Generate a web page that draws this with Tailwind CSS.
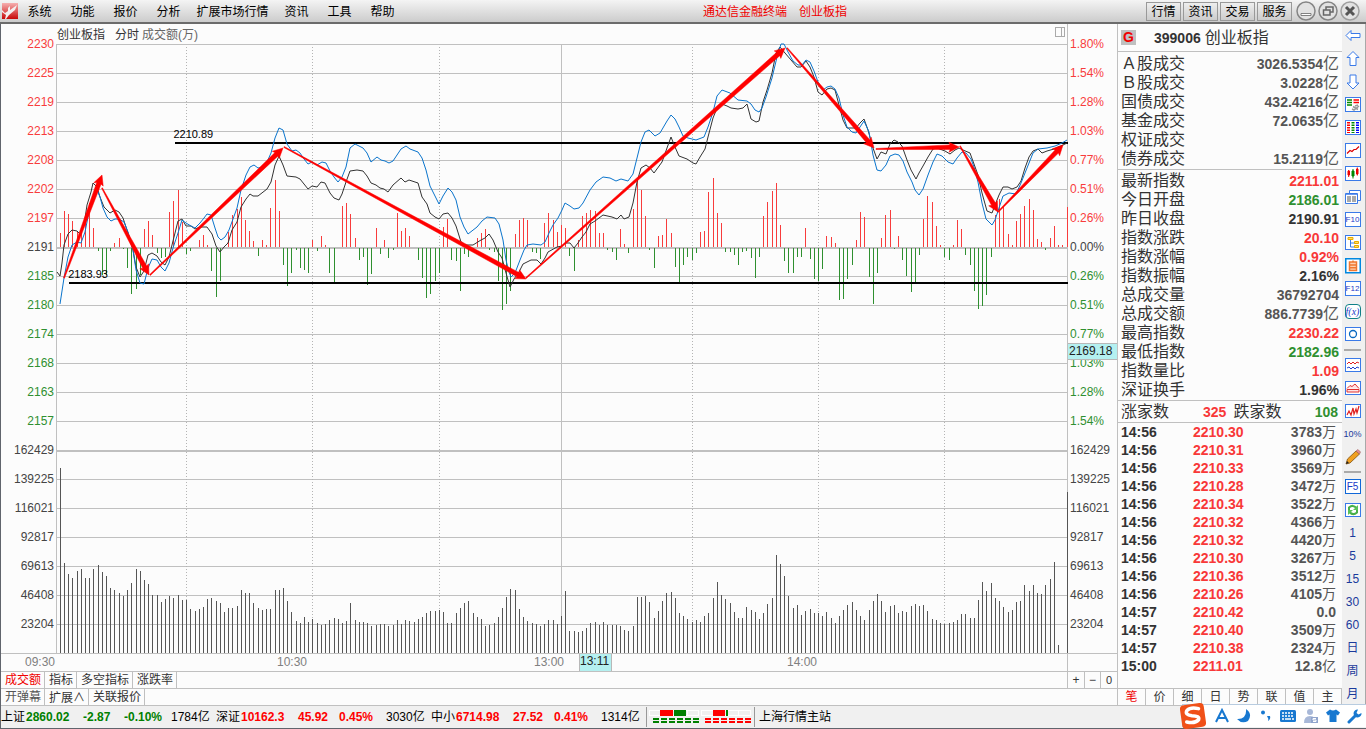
<!DOCTYPE html>
<html lang="zh-CN">
<head>
<meta charset="utf-8">
<meta name="viewport" content="width=device-width, initial-scale=1">
<title>通达信金融终端</title>
<script src="https://cdn.jsdelivr.net/npm/@tailwindcss/browser@4"></script>
</head>
<body class="flex min-h-screen flex-col bg-[#fcfcfc] font-['Liberation_Sans','Noto_Sans_CJK_SC',sans-serif] text-xs leading-none text-[#333]">

<!-- Title bar -->
<header class="flex h-6 shrink-0 items-center border-b-2 border-[#6b6b6b] bg-gradient-to-b from-[#f4f4f4] to-[#cccccc] text-black">
  <svg class="ml-0.5 h-4 w-4 shrink-0" viewBox="0 0 16 16" aria-hidden="true">
    <defs><linearGradient id="lg" x1="0" y1="0" x2="0" y2="1"><stop offset="0" stop-color="#f6b0b0"/><stop offset="1" stop-color="#c80808"/></linearGradient></defs>
    <rect width="16" height="16" fill="url(#lg)"/>
    <path d="M0 7l3 3 3-2V5l2-2 0 4 7-5-2 5-6 5-3 4H3l1-4L0 9z" fill="#f4f0f0"/>
  </svg>
  <nav class="flex h-full items-center pt-0.5" aria-label="主菜单">
    <button class="w-[43px]">系统</button><button class="w-[43px]">功能</button><button class="w-[43px]">报价</button><button class="w-[43px]">分析</button><button class="w-[85px]">扩展市场行情</button><button class="w-[43px]">资讯</button><button class="w-[43px]">工具</button><button class="w-[43px]">帮助</button>
  </nav>
  <h1 class="flex flex-1 justify-center gap-3 pt-0.5 text-[#f00000]"><span>通达信金融终端</span><span>创业板指</span></h1>
  <div class="flex items-center gap-0.5 pr-1.5">
    <button class="h-[19px] w-[35px] border border-[#999] bg-gradient-to-b from-[#eee] to-[#ccc] pt-px">行情</button>
    <button class="h-[19px] w-[35px] border border-[#999] bg-gradient-to-b from-[#eee] to-[#ccc] pt-px">资讯</button>
    <button class="h-[19px] w-[35px] border border-[#999] bg-gradient-to-b from-[#eee] to-[#ccc] pt-px">交易</button>
    <button class="h-[19px] w-[35px] border border-[#999] bg-gradient-to-b from-[#eee] to-[#ccc] pt-px">服务</button>
    <span class="ml-0.5 flex gap-0.5">
    <button aria-label="最小化"><svg width="20" height="20" viewBox="0 0 20 20"><circle cx="10" cy="10" r="9" fill="#e2e2e2" stroke="#858585" stroke-width="1.5"/><path d="M5 12.500h10v2H5z" fill="#fff" stroke="#666" stroke-width=".8"/></svg></button>
    <button aria-label="还原"><svg width="20" height="20" viewBox="0 0 20 20"><circle cx="10" cy="10" r="9" fill="#e2e2e2" stroke="#858585" stroke-width="1.5"/><path d="M8 9V6h7v5h-3M5.500 9h6.500v5H5.500z" fill="none" stroke="#666" stroke-width="1.5"/></svg></button>
    <button aria-label="关闭"><svg width="20" height="20" viewBox="0 0 20 20"><circle cx="10" cy="10" r="9" fill="#e2e2e2" stroke="#a0a0a0" stroke-width="1.500"/><path d="M6 6l8 8M14 6l-8 8" stroke="#555" stroke-width="3"/></svg></button>
    </span>
  </div>
</header>

<div class="flex flex-1 border-l border-[#60646c]">
  <!-- Chart column -->
  <main class="flex min-w-0 flex-1 flex-col">
    <div class="flex flex-1">
      <div id="axisL" class="w-[55px] shrink-0 pt-[6px] pb-[14px] pr-[2px] text-right"></div>
      <section class="relative min-w-0 flex-1" aria-label="分时走势图">
        <svg class="absolute inset-0 h-full w-full" viewBox="56 24 1012 629" preserveAspectRatio="none" role="img" aria-label="创业板指分时图">
          <g shape-rendering="crispEdges">
            <path id="gridH" stroke="#c0c0c0" fill="none"/>
            <path d="M56 248h1011M56 451h1011" stroke="#c0c0c0" stroke-width="2"/>
            <path d="M56.500 44v609M561.500 44v609M1067.500 24v629" stroke="#c0c0c0"/>
            <path d="M186.500 47v606M312.500 47v606M439.500 47v606M692.500 47v606M818.500 47v606M944.500 47v606" stroke="#b4b4b4" stroke-dasharray="1 2"/>
            <path id="up" stroke="#f83c3c"/>
            <path id="down" stroke="#2f9030"/>
            <path id="vol" stroke="#555"/>
            <path d="M175 143h893M69 283h999" stroke="#000" stroke-width="2"/>
          </g>
          <polyline id="avg" fill="none" stroke="#333" points="57,272 60,276 62,263 64,245 68,234 72,230 77,231 80,234 84,225 87,205 91,192 93,183 97,187 100,197 104,207 110,213 115,210 119,212 123,218 128,233 133,250 136,267 140,277 144,271 148,255 152,253 157,256 161,262 165,265 169,257 174,237 178,221 182,219 186,226 191,226 195,229 200,227 207,227 212,234 216,246 220,252 224,247 228,243 232,230 237,222 241,207 246,199 250,194 253,196 258,196 267,189 271,182 275,165 279,156 283,165 287,176 296,177 300,179 308,189 312,186 317,187 321,182 325,183 330,193 334,198 339,200 342,194 346,182 350,171 357,170 363,171 367,176 371,183 376,185 380,188 384,189 388,192 393,185 401,178 405,182 409,180 418,183 422,197 427,204 430,213 435,217 439,219 443,214 448,213 452,218 456,226 461,242 465,245 473,245 481,240 485,238 489,234 493,240 498,252 502,258 506,273 510,287 514,279 519,272 523,264 531,260 537,260 541,264 545,258 548,252 557,247 562,246 565,243 570,243 574,248 578,243 582,237 586,232 590,224 595,221 603,215 612,217 617,219 621,215 624,219 629,217 633,203 637,182 641,168 646,165 650,168 654,173 662,162 667,148 671,137 675,147 679,156 687,159 693,163 696,164 700,157 705,149 708,137 713,118 717,108 722,104 727,106 731,108 738,109 743,108 747,104 751,119 756,122 759,121 763,102 767,90 772,73 776,53 780,47 785,53 797,67 801,67 806,61 810,67 814,77 818,92 822,95 827,89 831,88 835,90 839,105 843,120 847,128 856,128 860,123 864,119 868,130 873,148 877,159 881,152 886,154 890,144 894,140 898,142 902,146 907,160 911,170 916,179 919,173 923,166 928,157 933,149 937,148 945,151 950,154 955,150 959,148 963,150 970,153 974,164 978,175 982,193 987,211 992,213 995,205 999,195 1003,187 1008,187 1012,189 1017,187 1021,181 1025,168 1029,157 1033,151 1038,149 1042,153 1047,151 1054,149 1058,147 1063,145 1067,143"/>
          <polyline id="lead" fill="none" stroke="#0a74cc" points="60,304 64,278 68,257 72,245 77,242 81,243 85,232 89,212 93,198 97,190 100,197 103,208 107,217 111,221 115,219 119,219 124,222 128,232 133,250 136,270 140,283 144,284 148,268 152,259 157,260 161,267 165,271 169,263 173,248 178,233 182,220 186,223 191,226 195,228 200,223 204,218 207,214 211,215 215,228 218,237 221,240 225,237 229,230 233,219 237,208 241,190 246,175 250,167 254,165 258,168 263,167 267,162 271,153 275,138 279,128 283,130 287,144 292,151 296,150 300,153 304,159 308,164 312,162 317,165 322,162 326,163 330,171 334,177 338,182 342,177 346,167 350,148 355,144 359,146 363,148 367,153 371,162 377,157 381,160 385,161 389,163 393,161 397,155 401,149 406,146 410,149 418,152 422,158 426,170 430,186 435,196 439,204 443,196 448,188 452,192 456,200 460,217 464,227 468,234 477,227 482,221 487,217 495,218 499,224 503,240 506,260 509,272 511,277 515,273 520,260 524,250 527,245 533,244 541,245 545,242 549,233 553,225 558,218 562,210 565,203 570,206 574,209 579,208 583,203 590,190 596,182 603,177 610,178 616,181 621,179 628,181 633,174 637,158 641,142 645,132 649,130 655,136 660,133 667,121 671,115 675,119 679,127 683,136 688,138 696,140 704,137 708,127 713,112 717,96 722,90 730,93 738,100 747,101 751,104 755,110 759,112 762,108 766,97 772,78 777,57 781,44 784,44 788,52 793,61 798,65 802,65 806,60 810,62 814,71 818,82 823,90 827,87 831,86 835,89 839,98 843,115 847,127 852,132 856,133 860,127 864,121 869,132 873,155 877,170 881,171 886,165 890,156 895,154 899,155 903,161 907,172 912,182 915,190 919,195 923,189 928,175 933,162 937,154 942,156 948,162 953,164 957,158 962,152 966,153 971,159 974,167 978,182 982,203 986,219 992,225 995,220 999,208 1003,196 1009,193 1016,194 1021,183 1029,163 1033,153 1038,149 1047,148 1055,146 1062,143 1067,140"/>
          <path id="arrows" fill="#ff0000" stroke="#ff0000" stroke-width=".5"/>
        </svg>
        <div class="absolute left-[1px] top-[5px] flex text-[#333]"><span class="w-[58px]">创业板指</span><span class="w-[27px]">分时</span><span class="text-[#666]">成交额(万)</span></div>
        <button class="absolute right-[3px] top-[3px] flex h-[10px] w-[10px] justify-end border border-[#aaa] pr-[2px]" aria-label="侧栏"><span class="h-full w-px bg-[#aaa]"></span></button>
        <span class="absolute left-[11.600%] top-[105px] text-[11px] text-black">2210.89</span>
        <span class="absolute left-[1.200%] top-[245px] text-[11px] text-black">2183.93</span>
      </section>
      <div class="relative w-[49px] shrink-0">
        <div id="axisR" class="pt-[6px] pl-[2px]"></div>
        <span class="absolute inset-x-0 top-[319px] h-[17px] border-y border-[#b8b8b8] bg-[#b4f0f0] pt-px pl-px text-[#222]">2169.18</span>
      </div>
    </div>
    <div class="flex h-[18px] border-t border-[#c0c0c0]">
      <div class="grid flex-1 grid-cols-[252fr_257fr_45fr_208fr_280fr] border-r border-[#c0c0c0] pl-6 text-[#808080]">
        <span class="pt-0.5">09:30</span><span class="pt-0.5">10:30</span><span class="pt-0.5">13:00</span><span class="w-[33px] border-x border-[#b8b8b8] bg-[#b4f0f0] pt-px text-[#222]">13:11</span><span class="pt-0.5">14:00</span>
      </div>
      <div class="w-[49px]"></div>
    </div>
    <div class="flex h-[17px] items-stretch border-t border-[#c0c0c0]">
      <button class="border-r border-[#c0c0c0] pr-[3px] pl-1 text-[#f00000]">成交额</button><button class="border-r border-[#c0c0c0] pr-[3px] pl-1">指标</button><button class="border-r border-[#c0c0c0] pr-[3px] pl-1">多空指标</button><button class="border-r border-[#c0c0c0] pr-[3px] pl-1">涨跌率</button>
      <span class="flex-1"></span>
      <button class="w-[17px] border-l border-[#c0c0c0]">+</button><button class="w-4 border-l border-[#c0c0c0]">−</button><button class="w-[17px] border-l border-[#c0c0c0] text-[11px]">0</button>
    </div>
    <div class="flex h-[18px] items-stretch border-y border-[#c0c0c0]">
      <button class="border-r border-[#c0c0c0] pr-[3px] pl-1 text-[#555]">开弹幕</button><button class="w-11 border-r border-[#c0c0c0] pl-1 text-left">扩展<span class="font-['Noto_Sans_CJK_SC']">∧</span></button><button class="border-r border-[#c0c0c0] pr-[3px] pl-1">关联报价</button>
    </div>
  </main>

  <!-- Quote panel -->
  <aside class="flex w-[225px] shrink-0 flex-col border-l border-[#c0c0c0] text-base leading-none">
    <h2 class="flex h-7 items-center border-b border-[#c0c0c0] pl-[3px]"><span class="h-[15px] w-[15px] bg-[#c0c0c0] text-center text-sm leading-[15px] font-bold text-[#f00000]">G</span><span class="ml-[18px] text-sm font-bold">399006</span><span class="ml-1">创业板指</span></h2>
    <dl id="turnover" class="h-[118px] border-b border-[#c0c0c0] pt-0.5"></dl>
    <dl id="quote" class="h-[231px] border-b border-[#c0c0c0] pt-px"></dl>
    <div class="flex h-[22px] items-center border-b border-[#c0c0c0] pr-1 pl-[3px]"><span>涨家数</span><b class="ml-[34px] text-sm text-[#f83838]">325</b><span class="ml-[7px]">跌家数</span><b class="ml-auto text-sm text-[#2f9030]">108</b></div>
    <table class="w-full table-fixed border-collapse text-sm leading-none font-bold" aria-label="分笔成交"><tbody id="ticks"></tbody></table>
    <div class="mt-auto grid h-[18px] grid-cols-8 border-y border-[#c0c0c0] text-xs leading-none">
      <button class="border-r border-[#c0c0c0] text-[#f00000]">笔</button><button class="border-r border-[#c0c0c0]">价</button><button class="border-r border-[#c0c0c0]">细</button><button class="border-r border-[#c0c0c0]">日</button><button class="border-r border-[#c0c0c0]">势</button><button class="border-r border-[#c0c0c0]">联</button><button class="border-r border-[#c0c0c0]">值</button><button class="border-r border-[#c0c0c0]">主</button>
    </div>
  </aside>

  <!-- Icon toolbar -->
  <nav class="flex w-6 shrink-0 flex-col border-r border-[#a8a8a8] bg-[#f0f0f0] pr-0.5 text-xs text-[#1a3a9c] [&>button]:flex [&>button]:h-[23px] [&>button]:items-center [&>button]:justify-center [&>hr]:mx-0.5 [&>hr]:mt-[3px] [&>hr]:mb-0.5 [&>hr]:h-0.5 [&>hr]:border-0 [&>hr]:bg-[#aaa]" aria-label="工具栏">
    <button aria-label="后退"><svg width="16" height="16" viewBox="0 0 16 16"><path d="M1 7.500l5-5v3h9v4H6v3z" fill="#fff" stroke="#3a7ae8"/></svg></button>
    <button aria-label="上移"><svg width="16" height="16" viewBox="0 0 16 16"><path d="M8 .5l6 6h-3v8H5v-8H2z" fill="#fff" stroke="#3a7ae8"/></svg></button>
    <button aria-label="下移"><svg width="16" height="16" viewBox="0 0 16 16"><path d="M8 15l6-6h-3V1H5v8H2z" fill="#fff" stroke="#3a7ae8"/></svg></button>
    <button aria-label="自选"><svg width="16" height="16" viewBox="0 0 16 16"><rect x=".5" y=".5" width="15" height="14" fill="#fff" stroke="#3a7ae8"/><path d="M2 3h5M2 5.500h5M2 8h5" stroke="#080" stroke-width="1.500"/><path d="M8.500 3H14M8.500 5.500H14" stroke="#f00" stroke-width="1.500"/><path d="M7 12l2 1 5-4M8 9.500l5 3M10 9l3-1" stroke="#999" stroke-width="1.500" fill="none"/></svg></button>
    <button aria-label="行情列表"><svg width="16" height="16" viewBox="0 0 16 16"><rect x=".5" y=".5" width="15" height="14" fill="#fff" stroke="#3a7ae8"/><path d="M3.500 2v11" stroke="#f00" stroke-width="3" stroke-dasharray="1.500 1"/><path d="M8 2v11" stroke="#080" stroke-width="3" stroke-dasharray="1.500 1"/><path d="M12.500 2v11" stroke="#00f" stroke-width="3" stroke-dasharray="1.500 1"/></svg></button>
    <button aria-label="分时图"><svg width="16" height="16" viewBox="0 0 16 16"><rect x=".5" y=".5" width="15" height="14" fill="#fff" stroke="#3a7ae8"/><path d="M2 10.500l3-3 2 1 2-2h2l3-3" fill="none" stroke="#d00" stroke-width="1.200"/></svg></button>
    <button aria-label="K线"><svg width="16" height="16" viewBox="0 0 16 16"><rect x=".5" y=".5" width="15" height="14" fill="#fff" stroke="#3a7ae8"/><path d="M3 5h1.500v4H3zM3.700 4v7M11.500 3H13v5h-1.500zM12.300 1.500v8" fill="#e00" stroke="#e00"/><path d="M7 5h2v5H7zM8 3v9.500" fill="#080" stroke="#080"/></svg></button>
    <button aria-label="多窗"><svg width="16" height="16" viewBox="0 0 16 16"><path d="M4.500 4V1.500h11v10H13" fill="#fff" stroke="#3a7ae8"/><path d="M.5 4.500h12v10H.5z" fill="#fff" stroke="#3a7ae8"/><path d="M1 5h11" stroke="#3a7ae8" stroke-width="1.500"/><path d="M2 8h9M2 10h9M2 12h9" stroke="#555" stroke-dasharray="4 1"/></svg></button>
    <button aria-label="F10"><span class="h-[15px] w-4 border border-[#3a7ae8] bg-white text-center text-[8px] leading-[14px] text-[#1a3ac8]">F10</span></button>
    <button aria-label="板块树"><svg width="16" height="16" viewBox="0 0 16 16"><rect x=".5" y=".5" width="15" height="14" fill="#fff" stroke="#3a7ae8"/><path d="M5.500 5v7H10M5.500 8H10" fill="none" stroke="#3a7ae8"/><path d="M3 2.500h5v2H3zM9.500 6.500h4v2h-4zM9.500 10.500h4v2h-4z" fill="#ffe060" stroke="#e8a800"/></svg></button>
    <button aria-label="自选股"><svg width="16" height="16" viewBox="0 0 16 16"><rect x=".75" y=".75" width="14.500" height="14" fill="#fff" stroke="#0088e0" stroke-width="1.500"/><path d="M4.500 4h7v8.500h-7zM4.500 7h7M4.500 9.700h7M8 4V2.500" fill="#ffd0b0" stroke="#f07830" stroke-width="1.500"/></svg></button>
    <button aria-label="F12"><span class="h-[15px] w-4 border border-[#3a7ae8] bg-white text-center text-[8px] leading-[14px] text-[#1a3ac8]">F12</span></button>
    <button aria-label="公式"><span class="h-[15px] w-4 rounded-sm border border-[#108088] bg-white text-center font-['Liberation_Serif'] text-[10px] leading-[13px] text-[#1a3ac8] italic">f(x)</span></button>
    <button aria-label="圆"><svg width="16" height="16" viewBox="0 0 16 16"><rect x=".5" y=".5" width="15" height="13" fill="#fff" stroke="#3a7ae8"/><circle cx="8" cy="7" r="3.500" fill="none" stroke="#0868c0" stroke-width="1.300"/></svg></button>
    <hr>
    <button aria-label="叠加"><svg width="16" height="16" viewBox="0 0 16 16"><rect x=".5" y="1.500" width="15" height="13" fill="#fff" stroke="#3a7ae8"/><path d="M2 7l2-2 2 2 2-2 2 2 2-2 2 1" fill="none" stroke="#e02020"/><path d="M2 11l2-1 2 2 2-2 2 2 2-2 2 1" fill="none" stroke="#2040d0"/></svg></button>
    <button aria-label="区域"><svg width="16" height="16" viewBox="0 0 16 16"><rect x=".5" y="1.500" width="15" height="13" fill="#fff" stroke="#3a7ae8"/><path d="M2 8.500l3-3 2 1 3-2.500 4 4.500M2 12V9.500h12V12z" fill="#ffe4e4" stroke="#e03030"/></svg></button>
    <button aria-label="波动"><svg width="16" height="16" viewBox="0 0 16 16"><rect x=".5" y="1.500" width="15" height="13" fill="#fff" stroke="#3a7ae8"/><path d="M2 12l2-4 2 4 2-7 1 6 2-5 1 4 2-7" fill="none" stroke="#e02020" stroke-width="1.200"/></svg></button>
    <button class="text-[9px]">10%</button>
    <button aria-label="画线"><svg width="16" height="16" viewBox="0 0 16 16"><path d="M1 15l1.500-5L11 2l3.500 3L5 14z" fill="#f0a020" stroke="#805010" stroke-width=".8"/><path d="M11 2l2-1.500L15.500 3l-1 2z" fill="#e89090" stroke="#a06060" stroke-width=".6"/><path d="M1 15l1-3 2 2z" fill="#222"/></svg></button>
    <hr>
    <button aria-label="F5"><span class="h-[15px] w-4 border border-[#1068d8] bg-white text-center text-[10px] leading-[14px] text-[#1a3ac8]">F5</span></button>
    <button aria-label="刷新"><svg width="16" height="16" viewBox="0 0 16 16"><rect x=".5" y="1.500" width="15" height="13" fill="#fff" stroke="#3a7ae8"/><path d="M4 8V5.500Q8 2 11.500 6M12 8v2.500Q8 14 4.500 10" fill="none" stroke="#48b048" stroke-width="2"/><path d="M13 3v5H8zM3 13V8h5z" fill="#58c058"/></svg></button>
    <button>1</button><button>5</button><button>15</button><button>30</button><button>60</button><button>日</button><button>周</button><button>月</button>
  </nav>
</div>

<!-- Status bar -->
<footer class="flex h-[23px] shrink-0 items-center border-b border-l border-[#60646c] bg-[#f0f0f0] text-xs text-black">
  <span class="w-[25px]">上证</span><b class="w-[57px] text-[#008000]">2860.02</b><b class="w-[41px] text-[#008000]">-2.87</b><b class="w-[47px] text-[#008000]">-0.10%</b><span class="w-[45px]">1784亿</span>
  <span class="w-[25px]">深证</span><b class="w-[57px] text-[#ff0000]">10162.3</b><b class="w-[41px] text-[#ff0000]">45.92</b><b class="w-[47px] text-[#ff0000]">0.45%</b><span class="w-[45px]">3030亿</span>
  <span class="w-[25px]">中小</span><b class="w-[57px] text-[#ff0000]">6714.98</b><b class="w-[41px] text-[#ff0000]">27.52</b><b class="w-[47px] text-[#ff0000]">0.41%</b><span class="w-[45px]">1314亿</span>
  <svg class="h-5 w-[109px] shrink-0" viewBox="646 708 109 20" shape-rendering="crispEdges" role="img" aria-label="涨跌对比">
    <path d="M646.500 708v20M754.500 708v20" stroke="#999"/>
    <path d="M649.500 711.500h49v5h-49zM701.500 711.500h49v5h-49zM687.500 711v6M738.500 711v6" fill="none" stroke="#fff"/>
    <path d="M660 711h13v6h-13zM713 711h12v6h-12z" fill="#f00"/><path d="M674 711h12v6h-12zM726 711h2v6h-2z" fill="#008000"/>
    <path d="M653 720h46M653 723h46" stroke="#008000" stroke-width="2" stroke-dasharray="6 2"/>
    <path d="M705 720h46M705 723h46" stroke="#f00" stroke-width="2" stroke-dasharray="6 2"/>
  </svg>
  <span class="pl-1">上海行情主站</span>
</footer>

<!-- Floating input-method bar -->
<div class="fixed right-0 bottom-[2px] flex h-[23px] w-[184px] items-center border-t border-l border-[#b8cce0] bg-white pl-7">
  <svg class="absolute -left-1 -top-[3px] h-7 w-7" viewBox="0 0 28 28" aria-label="搜狗输入法"><g transform="rotate(-8 14 14)"><rect x="2" y="2" width="24" height="24" rx="4" fill="#f05018"/><path d="M20.500 7.500Q13 4.500 9 7.500Q5.500 11.500 13 13.500Q21 15 19 18.500Q15 22 7 19" fill="none" stroke="#fff" stroke-width="3.500" stroke-linecap="round"/></g></svg>
  <div class="flex flex-1 items-center justify-around text-[#1878d0]">
    <button aria-label="英文"><svg width="16" height="16" viewBox="0 0 16 16"><path d="M2 14L8 2l6 12M4.500 10h7" fill="none" stroke="#1878d0" stroke-width="2"/></svg></button>
    <button aria-label="半角"><svg width="16" height="16" viewBox="0 0 16 16"><path d="M10 1Q17 6 12 13Q6 16.500 1 11Q11 11.500 10 1z" fill="#1878d0"/></svg></button>
    <button aria-label="标点"><svg width="16" height="16" viewBox="0 0 16 16"><circle cx="5" cy="4.500" r="2" fill="#1878d0"/><path d="M9 8h3q1 3-2 5q1-2-1-5z" fill="#1878d0"/></svg></button>
    <button aria-label="键盘"><svg width="18" height="16" viewBox="0 0 18 16"><rect x="1" y="2" width="16" height="12" rx="1.500" fill="#1878d0"/><path d="M3 5h12M3 8h12" stroke="#fff" stroke-width="1.500" stroke-dasharray="2 1"/><path d="M3 11h2M6 11h6M13 11h2" stroke="#fff" stroke-width="1.500"/></svg></button>
    <button aria-label="账号"><svg width="16" height="16" viewBox="0 0 16 16"><circle cx="7" cy="4" r="3" fill="#a8b8d8"/><path d="M1 15Q1 8 7 8t6 7z" fill="#a8b8d8"/><path d="M8 9h7v6H8z" fill="#90a4cc"/><path d="M13 10.500h-3v1.500h3v1.500h-3" fill="none" stroke="#fff"/></svg></button>
    <button aria-label="皮肤"><svg width="16" height="16" viewBox="0 0 16 16"><path d="M5 1.500q3 2 6 0l4 3-2 3-1.500-1V14h-7V6.500L3 7.500l-2-3z" fill="#1878d0"/></svg></button>
    <button aria-label="设置"><svg width="16" height="16" viewBox="0 0 16 16"><path d="M2 14l7-7" stroke="#1878d0" stroke-width="3" stroke-linecap="round"/><path d="M14.500 5A4 4 0 1 1 11 1.500L9.500 5l2 1.500z" fill="#1878d0"/></svg></button>
  </div>
</div>

<script>
const $ = id => document.getElementById(id);

// Axis captions, one per grid line
const prices = [2230,2225,2219,2213,2208,2202,2197,2191,2185,2180,2174,2168,2163,2157];
const rates = ['1.80%','1.54%','1.28%','1.03%','0.77%','0.51%','0.26%','0.00%','0.26%','0.51%','0.77%','1.03%','1.28%','1.54%'];
const volumes = [162429,139225,116021,92817,69613,46408,23204];
const tone = i => i < 7 ? 'h-[29px] leading-[29px] text-[#f83c3c]' : i === 7 || i > 13 ? 'h-[29px] leading-[29px] text-[#444]' : 'h-[29px] leading-[29px] text-[#2f9030]';
const axis = list => list.map((t, i) => `<div class="${tone(i)}">${t}</div>`).join('');
$('axisL').innerHTML = axis([...prices, ...volumes]);
$('axisR').innerHTML = axis([...rates, ...volumes]);

let g = '';
for (let i = 0; i < 21; i++) if (i !== 7 && i !== 14) g += `M56 ${44.5 + 29 * i}h1011`;
$('gridH').setAttribute('d', g);

// Minute x position, minutes 1 to 240
const mx = i => Math.floor(56 + 4.2125 * i) + 0.5;

const power = [14,36,33,26,15,14,28,44,19,-3,-27,-27,-3,4,9,-1,-20,-46,-41,-27,18,26,12,-5,-10,-9,35,46,57,25,-6,-3,0,7,12,2,-23,-49,-33,0,15,32,38,50,27,16,6,-8,7,2,39,67,36,-17,-38,-25,-2,-20,-22,-25,7,-3,11,2,-25,-34,0,41,44,33,9,-12,-9,-37,-26,19,-6,7,-10,-2,34,16,19,11,0,-12,-30,-50,-46,-33,-25,20,28,-12,-13,-43,-6,-9,-3,9,14,18,-2,-4,-33,-62,-56,-43,13,27,29,27,-4,-5,-11,24,34,27,15,22,19,-8,-23,7,31,34,37,36,14,14,-2,-4,-12,18,3,-5,38,69,57,31,-2,-20,11,12,28,14,-19,-34,-17,-9,-12,-5,15,16,55,69,34,24,-4,-4,-7,-17,-4,-3,-10,-30,-9,31,45,56,64,22,-13,-25,-25,-9,-9,19,-11,-31,-33,-21,11,10,4,-52,-51,-31,-17,7,35,30,-29,-56,-25,9,32,37,-1,11,-12,-28,-44,-35,-7,28,51,45,21,2,-9,-12,2,27,18,-7,-17,-43,-61,-58,-47,-9,32,48,40,13,2,26,33,41,48,37,8,5,-2,9,21,2,2,40];
let up = '', down = '';
power.forEach((h, k) => { if (h > 0) up += `M${mx(k + 1)} 247v${-h}`; else if (h < 0) down += `M${mx(k + 1)} 248v${-h}`; });
$('up').setAttribute('d', up);
$('down').setAttribute('d', down);

// Turnover per minute, 87 units between grid lines, counted down from the top of the pane
const turnover = [84,370,402,414,393,387,414,414,387,375,396,408,444,450,459,468,450,429,387,393,420,432,465,465,486,477,468,474,465,480,480,507,513,507,501,477,474,483,489,516,504,504,498,450,459,459,489,504,510,507,507,450,450,444,483,516,543,549,531,546,537,549,555,552,540,534,537,549,543,489,540,546,546,549,558,555,552,552,558,555,540,552,540,543,546,537,531,519,513,513,510,516,549,549,519,504,489,483,519,531,537,558,555,549,531,504,471,447,450,507,531,543,549,552,558,552,540,540,552,528,453,573,573,576,573,564,549,546,555,546,555,555,555,558,570,573,558,471,471,468,486,534,513,483,459,456,474,519,528,537,546,540,546,528,519,474,426,465,477,489,516,534,534,501,510,516,537,519,492,474,345,372,408,468,504,495,525,513,507,519,519,528,516,534,549,528,510,495,486,510,528,540,510,483,462,483,516,498,495,519,513,516,498,492,498,495,513,537,540,549,552,549,546,540,522,522,534,534,480,426,453,429,474,483,501,516,510,486,483,435,453,435,459,462,435,417,366,615,640,156];
$('vol').setAttribute('d', turnover.map((v, k) => `M${mx(k + 1)} 653V${440 + Math.round(v / 3)}`).join(''));

// Tapered trend arrows: tail x, y, tip x, y
const trend = [[64,278,102,175],[102,188,149,275],[150,275,283,148],[284,147,526,279],[526,278,785,48],[787,48,874,148],[876,149,959,147],[960,146,998,212],[998,212,1063,145]];
$('arrows').setAttribute('d', trend.map(([x1, y1, x2, y2]) => {
  const L = Math.hypot(x2 - x1, y2 - y1), ux = (x2 - x1) / L, uy = (y2 - y1) / L;
  const p = (d, w) => `${(x1 + ux * d - uy * w).toFixed(1)} ${(y1 + uy * d + ux * w).toFixed(1)}`;
  return `M${p(0, .5)}L${p(L - 9, 2.3)}L${p(L - 10, 5)}L${p(L, 0)}L${p(L - 10, -5)}L${p(L - 9, -2.3)}L${p(0, -.5)}Z`;
}).join(''));

// Quote panel rows
const row = ([k, v, c, u = '']) => `<div class="flex h-[19px] items-center justify-between pr-[3px] pl-[3px]"><dt>${k}</dt><dd class="flex items-center ${c}"><b class="text-sm leading-none">${v}</b>${u}</dd></div>`;
const R = 'text-[#f83838]', G = 'text-[#2f9030]', D = 'text-[#333]', M = 'text-[#555]';
$('turnover').innerHTML = [['Ａ股成交','3026.5354',M,'亿'],['Ｂ股成交','3.0228',M,'亿'],['国债成交','432.4216',M,'亿'],['基金成交','72.0635',M,'亿'],['权证成交','',M],['债券成交','15.2119',M,'亿']].map(row).join('');
$('quote').innerHTML = [['最新指数','2211.01',R],['今日开盘','2186.01',G],['昨日收盘','2190.91',D],['指数涨跌','20.10',R],['指数涨幅','0.92%',R],['指数振幅','2.16%',D],['总成交量','36792704',M],['总成交额','886.7739',M,'亿'],['最高指数','2230.22',R],['最低指数','2182.96',G],['指数量比','1.09',R],['深证换手','1.96%',D]].map(row).join('');
$('ticks').innerHTML = [['14:56','2210.30','3783','万'],['14:56','2210.31','3960','万'],['14:56','2210.33','3569','万'],['14:56','2210.28','3472','万'],['14:56','2210.34','3522','万'],['14:56','2210.32','4366','万'],['14:56','2210.32','4420','万'],['14:56','2210.30','3267','万'],['14:56','2210.36','3512','万'],['14:56','2210.26','4105','万'],['14:57','2210.42','0.0',''],['14:57','2210.40','3509','万'],['14:57','2210.38','2324','万'],['15:00','2211.01','12.8','亿']]
  .map(([t, p, a, u]) => `<tr class="h-[18px]"><td class="w-[75px] p-0 pl-[3px]">${t}</td><td class="w-[60px] p-0 text-[#f83838]">${p}</td><td class="p-0 pr-1.5 text-[#555]"><span class="flex items-center justify-end">${a}<span class="text-sm leading-none font-normal">${u}</span></span></td></tr>`).join('');
</script>
</body>
</html>
